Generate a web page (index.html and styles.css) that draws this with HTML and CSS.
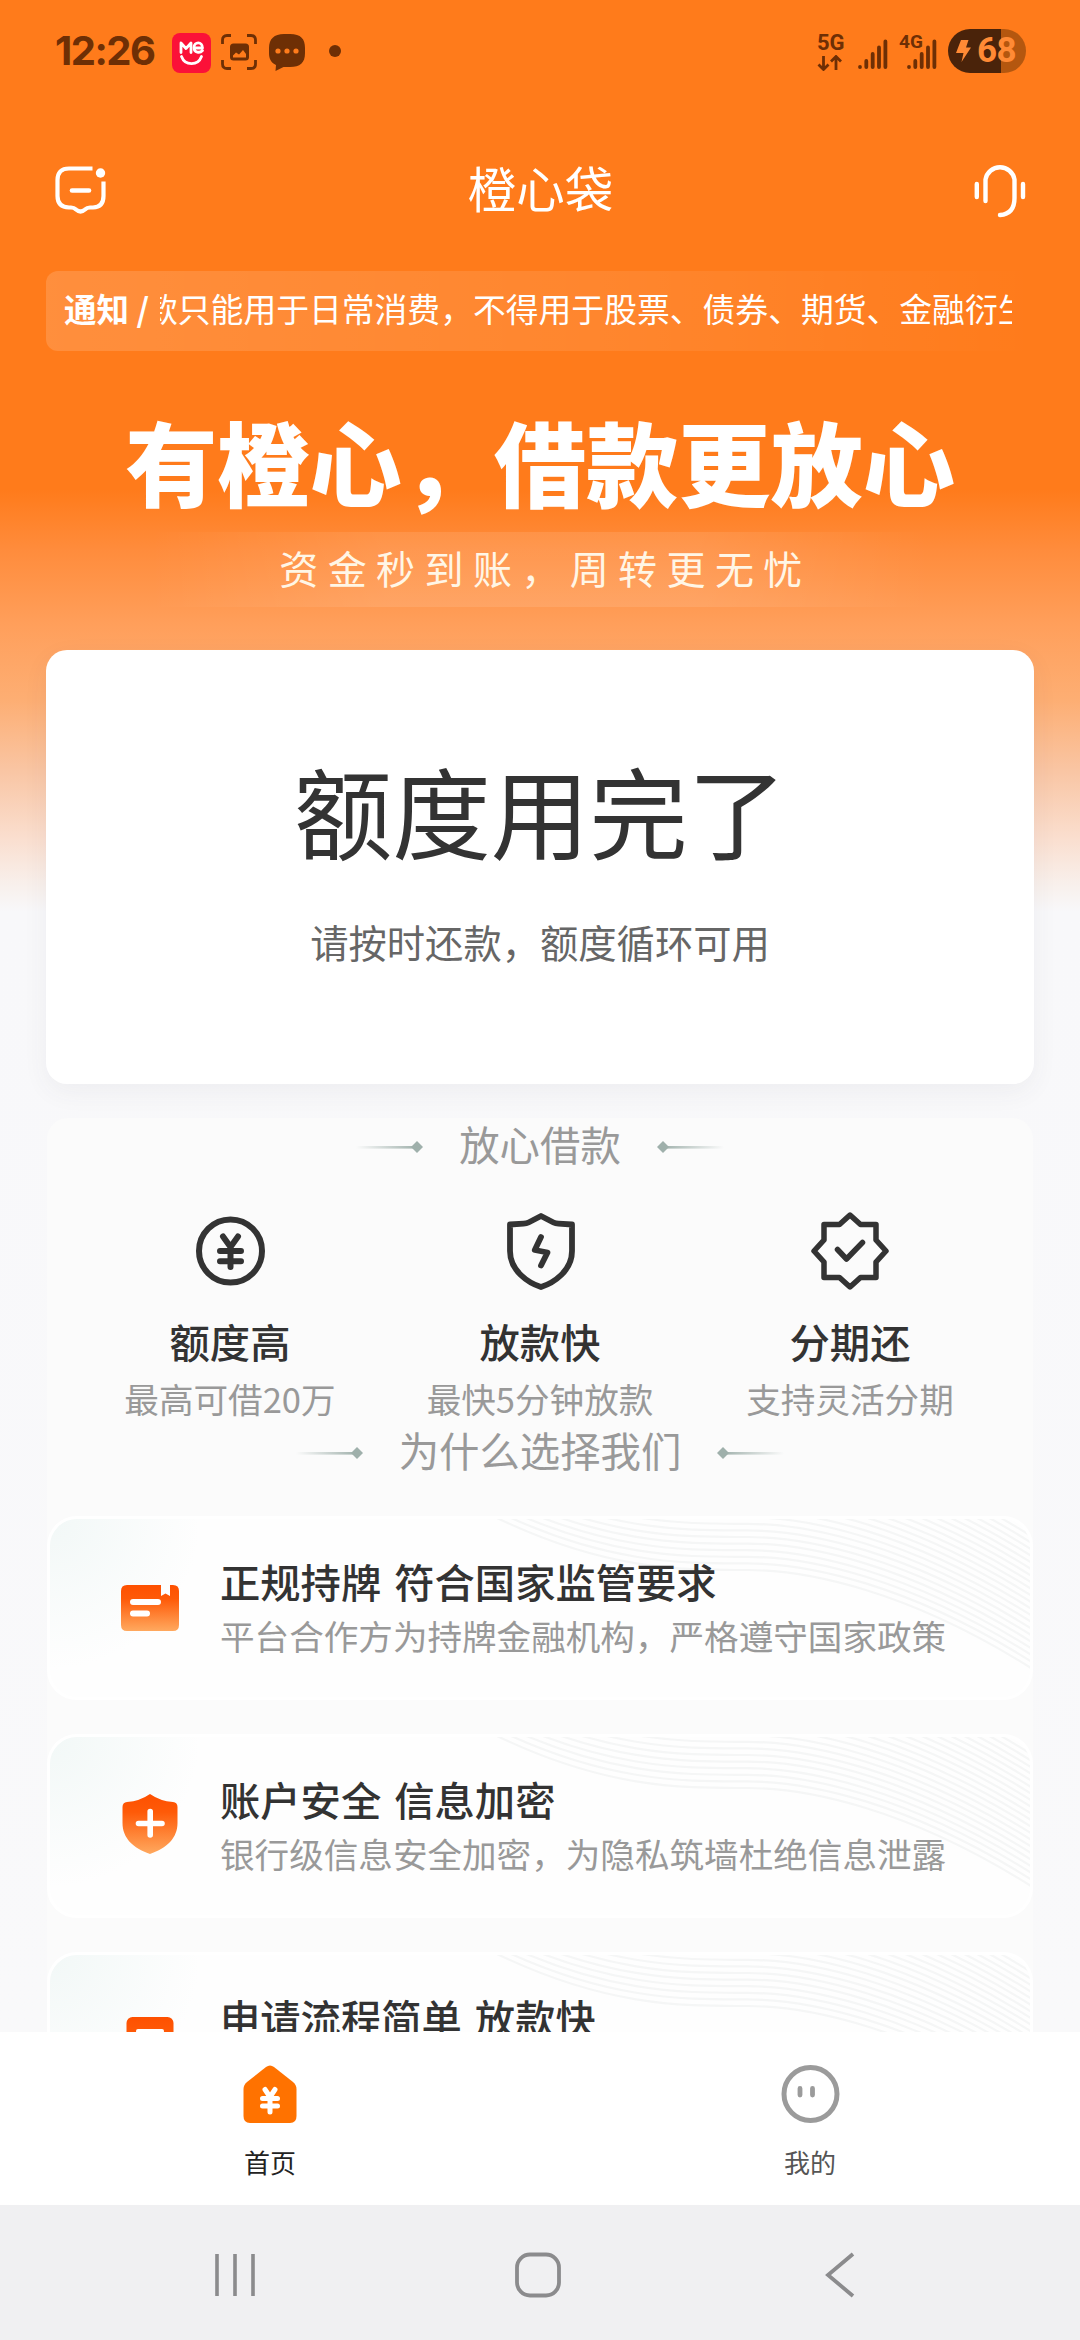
FILE: index.html
```html
<!DOCTYPE html>
<html lang="zh-CN">
<head>
<meta charset="utf-8">
<title>橙心袋</title>
<link rel="stylesheet" href="styles.css">
</head>
<body>
<svg class="defs" width="0" height="0" aria-hidden="true">
  <defs>
    <linearGradient id="ember" x1="0" y1="0" x2="0" y2="1"><stop offset="0" stop-color="#fe5000"/><stop offset=".3" stop-color="#fe5a08"/><stop offset="1" stop-color="#ffa95f"/></linearGradient>
    <linearGradient id="fade" x1="0" y1="0" x2="1" y2="0"><stop offset="0" stop-color="#9fb0ab" stop-opacity="0"/><stop offset="1" stop-color="#9fb0ab"/></linearGradient>
    <symbol id="ornament" viewBox="0 0 68 14"><rect x="0" y="6" width="62" height="2.6" fill="url(#fade)"/><path d="M61 1 67 7 61 13 55 7Z" fill="#9fb0ab"/></symbol>
    <path id="wave" d="M446 0C560 56 640 54 700 54S860 74 984 152"/>
    <g id="wave4"><use href="#wave"/><use href="#wave" y="-6.6"/><use href="#wave" y="-13.2"/><use href="#wave" y="-19.8"/></g>
    <symbol id="waves" viewBox="0 0 987 185"><g fill="none" stroke="#f5f6f6" stroke-width="2.2"><use href="#wave4"/><use href="#wave4" y="-26.4"/><use href="#wave4" y="-52.8"/><use href="#wave4" y="-79.2"/><use href="#wave4" y="-105.6"/><use href="#wave4" y="-132"/></g></symbol>
  </defs>
</svg>

<main class="screen">
  <div class="status">
    <span class="clock">12:26</span>
    <svg class="me" width="39" height="40" viewBox="0 0 39 40"><rect width="39" height="40" rx="8" fill="#fb1138"/><g fill="none" stroke="#fff" stroke-width="2.8" stroke-linecap="round" stroke-linejoin="round"><path d="M9 19.5V10l5 5.500L19 10v9.500"/><path d="M22.500 15h8c0-7-8.500-6.500-8.500-.5 0 5.500 6 5.800 8.500 3"/><path d="M9.500 23.500c3.500 9.500 16.500 9.500 20 0"/></g></svg>
    <svg class="shot" width="36" height="36" viewBox="0 0 36 36"><path d="M1.500 10V6Q1.500 1.500 6 1.500H10M26 1.500h4Q34.500 1.500 34.500 6v4M34.500 26v4q0 4.500-4.500 4.500h-4M10 34.500H6Q1.500 34.500 1.500 30V26" fill="none" stroke="#6e2f05" stroke-width="2.8"/><rect x="9" y="9.500" width="19" height="17" rx="3.500" fill="#6e2f05"/><path d="M12 23.500v-2l3-3 3 2 4-4.500 3 4v3.500z" fill="#ff7b1b"/></svg>
    <svg class="chat" width="36" height="37" viewBox="0 0 36 37"><path d="M15 0h6c11 0 15 5 15 14v5c0 10-5 14-15 14H14.500L6.500 37l.5-6C2 28.500 0 25 0 19v-5C0 5 5 0 15 0z" fill="#6e2f05"/><g fill="#ff7b1b"><circle cx="9" cy="17" r="2.600"/><circle cx="18" cy="17" r="2.600"/><circle cx="27" cy="17" r="2.600"/></g></svg>
    <i class="dot"></i>
    <div class="radio">
      <div class="fiveg"><span>5G</span><svg width="26" height="16" viewBox="0 0 26 16"><path d="M6.500 1v13M1.500 9.500l5 5 5-5M19 15V2M14 6.500l5-5 5 5" fill="none" stroke="#6e2f05" stroke-width="2.800"/></svg></div>
      <svg class="bars" width="30" height="30" viewBox="0 0 30 30"><path d="M2 28v0M8.300 28V22M14.700 28V15M21 28V8.500M27.400 28V2.500" stroke="#6e2f05" stroke-width="3.800" stroke-linecap="round"/></svg>
      <div class="fourg"><span>4G</span><svg width="30" height="30" viewBox="0 0 30 30"><path d="M2 28v0M8.300 28V22M14.700 28V15M21 28V8.500M27.400 28V2.500" stroke="#6e2f05" stroke-width="3.800" stroke-linecap="round"/></svg></div>
      <div class="battery"><svg width="15" height="22" viewBox="0 0 15 22"><path d="M5 0h7.500L10 7.500h5L5.500 22l2-9H0z" fill="#ff8a35"/></svg><span>68</span></div>
    </div>
  </div>

  <header class="bar">
    <svg width="52" height="50" viewBox="0 0 52 50"><g fill="none" stroke="#fff" stroke-width="4.200"><path d="M37.500 3.500H14Q2.500 3.500 2.500 15V31Q2.500 42 14 42.500H16Q19 42.500 21 44.500Q25.500 48.500 30 44.500Q32 42.500 35 42.500H38Q48.500 42 48.500 31V16.500"/><path d="M17 25.500H34" stroke-width="4.600" stroke-linecap="round"/></g><circle cx="45.500" cy="8" r="4.700" fill="#fff"/></svg>
    <h1>橙心袋</h1>
    <svg width="52" height="56" viewBox="0 0 52 56"><path d="M11.500 39V17.500a14.700 14.700 0 0 1 29 0V36Q40.500 52 26 53M2.800 22V35M49 22V35" fill="none" stroke="#fff" stroke-width="4.400" stroke-linecap="round"/></svg>
  </header>

  <div class="notice"><b>通知 /</b><div class="ticker"><span>款只能用于日常消费，不得用于股票、债券、期货、金融衍生</span></div></div>

  <h2 class="slogan">有橙心，借款更放心</h2>
  <p class="tagline">资金秒到账，周转更无忧</p>

  <section class="quota">
    <h3>额度用完了</h3>
    <p>请按时还款，额度循环可用</p>
  </section>

  <section class="panel">
    <div class="heading"><svg><use href="#ornament"/></svg><h4>放心借款</h4><svg class="flip"><use href="#ornament"/></svg></div>
    <div class="features">
      <div class="feature">
        <svg width="80" height="80" viewBox="0 0 80 80"><g fill="none" stroke="#333" stroke-width="6" stroke-linecap="round" stroke-linejoin="round"><circle cx="40.500" cy="40" r="31.500"/><path d="M33 25.500 40.500 36 48 25.500M40.500 36V56M30 40H51M30 50.300H51"/></g></svg>
        <h5>额度高</h5><p>最高可借20万</p>
      </div>
      <div class="feature">
        <svg width="80" height="80" viewBox="0 0 80 80"><g fill="none" stroke="#333" stroke-width="5.800" stroke-linecap="round" stroke-linejoin="round"><path d="M41 5 53.500 11.500Q55.500 12.500 58.500 12.700L72 13.500V40C72 60 53.500 72 41 76C28.500 72 10 60 10 40V13.500L23.500 12.700Q26.500 12.500 28.500 11.500Z"/><path d="M41 26 34.800 39 47.500 41.500 41 54.500"/></g></svg>
        <h5>放款快</h5><p>最快5分钟放款</p>
      </div>
      <div class="feature">
        <svg width="80" height="80" viewBox="0 0 80 80"><g fill="none" stroke="#333" stroke-width="5.500" stroke-linecap="round" stroke-linejoin="round"><path d="M40 4 50.500 13.500H66V29L76 40 66 51V66.500H50.500L40 76 29.500 66.500H14V51L4 40 14 29V13.500H29.500Z"/><path d="M27.500 38.500 36.500 48 52.500 31.500"/></g></svg>
        <h5>分期还</h5><p>支持灵活分期</p>
      </div>
    </div>
    <div class="heading second"><svg><use href="#ornament"/></svg><h4>为什么选择我们</h4><svg class="flip"><use href="#ornament"/></svg></div>

    <div class="reasons">
      <article class="reason">
        <svg class="waves"><use href="#waves"/></svg>
        <svg class="icon" width="58" height="58" viewBox="0 0 58 58"><path d="M6 6H40V17L44.500 14.500 49 17V6H52Q58 6 58 12V46Q58 52 52 52H6Q0 52 0 46V12Q0 6 6 6Z" fill="url(#ember)"/><path d="M12 23H37M12 34.500H26" stroke="#fff" stroke-width="6" stroke-linecap="round"/></svg>
        <div><h5>正规持牌 符合国家监管要求</h5><p>平台合作方为持牌金融机构，严格遵守国家政策</p></div>
      </article>
      <article class="reason">
        <svg class="waves"><use href="#waves"/></svg>
        <svg class="icon shield" width="58" height="62" viewBox="0 0 58 62"><path d="M29 1Q39 8 52 9Q56.500 9.500 56.500 14V30C56.500 45 46 55 29 61C12 55 1.500 45 1.500 30V14Q1.500 9.500 6 9Q19 8 29 1Z" fill="url(#ember)"/><path d="M17.500 30.500H41M29.200 18.500V42" stroke="#fff" stroke-width="5.600" stroke-linecap="round"/></svg>
        <div><h5>账户安全 信息加密</h5><p>银行级信息安全加密，为隐私筑墙杜绝信息泄露</p></div>
      </article>
      <article class="reason">
        <svg class="waves"><use href="#waves"/></svg>
        <svg class="icon" width="58" height="58" viewBox="0 0 58 58"><rect x="5.500" y="2" width="47" height="55" rx="6" fill="url(#ember)"/><path d="M17 16H41M17 27H41" stroke="#fff" stroke-width="4" stroke-linecap="round"/></svg>
        <div><h5>申请流程简单 放款快</h5></div>
      </article>
    </div>
  </section>
</main>

<nav class="tabs">
  <div class="tab active"><svg width="60" height="60" viewBox="0 0 60 60"><path d="M26 3Q30 0 34 3L53 18Q56.500 21 56.500 25V52Q56.500 59 50 59H10Q3.500 59 3.500 52V25Q3.500 21 7 18Z" fill="#ff7200"/><path d="M25 25.500 30 33 35 25.500M30 33V48M22.500 34.500H37.500M22.500 42H37.500" fill="none" stroke="#fff" stroke-width="5" stroke-linecap="round"/></svg><span>首页</span></div>
  <div class="tab"><svg width="60" height="60" viewBox="0 0 60 60"><circle cx="30.500" cy="30" r="26.500" fill="none" stroke="#9b9b9b" stroke-width="5"/><path d="M20 24.500V31M32.500 24.500V31" stroke="#9b9b9b" stroke-width="4.800" stroke-linecap="round"/></svg><span>我的</span></div>
</nav>

<footer class="sysnav">
  <svg width="40" height="44" viewBox="0 0 40 44"><path d="M2 1V43M20 1V43M38 1V43" stroke="#8b8b8d" stroke-width="3.600"/></svg>
  <svg class="home" width="46" height="46" viewBox="0 0 46 46"><rect x="2" y="2.500" width="42" height="41" rx="13" fill="none" stroke="#8b8b8d" stroke-width="3.800"/></svg>
  <svg width="30" height="46" viewBox="0 0 30 46"><path d="M28 2 3 23 28 44" fill="none" stroke="#8b8b8d" stroke-width="3.800"/></svg>
</footer>
</body>
</html>
```
FILE: styles.css
```css
* { box-sizing: border-box; margin: 0; padding: 0; }
body {
  width: 1080px; height: 2340px; overflow: hidden;
  display: flex; flex-direction: column;
  font-family: "Noto Sans CJK SC", sans-serif;
  background: #fff; color: #333;
}
.defs { position: absolute; }
svg { display: block; flex: none; }

.screen {
  height: 2032px; overflow: hidden; flex: none;
  background: linear-gradient(#ff7b1b 0, #ff7b1b 490px, #ff8c3c 550px, #ff9f5b 625px, #fdae73 700px, #f9c5a3 770px, #fadfd0 840px, #f8f0ec 885px, #f8f8fa 912px, #f9f9fa 100%);
}

.status { height: 102px; display: flex; align-items: center; padding: 2px 54px 0 55px; color: #6e2f05; font-family: Roboto, sans-serif; }
.clock { width: 117px; font: 700 40px/44px Inter, sans-serif; letter-spacing: -1.5px; white-space: nowrap; margin-top: -3px; }
.me { margin-top: 1px; }
.shot { margin-left: 10px; }
.chat { margin-left: 12px; }
.dot { width: 12px; height: 12px; border-radius: 50%; background: #6e2f05; margin-left: 24px; margin-top: -2px; }
.radio { margin-left: auto; display: flex; align-items: center; }
.fiveg, .fourg span { font-size: 22px; font-weight: 700; line-height: 17px; }
.fiveg { width: 26px; margin-right: 15px; }
.fiveg svg { margin-top: 4px; }
.bars { margin-top: 4px; }
.fourg { display: flex; margin: 4px 11px 0 11px; }
.fourg span { margin-top: -6px; width: 8px; font-size: 19px; }
.battery {
  width: 78px; height: 44px; border-radius: 22px; margin-top: -3px;
  display: flex; align-items: center; padding-left: 8px; gap: 6px;
  background: linear-gradient(90deg, #4a230a 53px, #b4570f 53px);
}
.battery span { font: 700 35px/44px Roboto, sans-serif; color: #ff8a35; letter-spacing: -.5px; }

.bar { height: 169px; padding: 7px 54px 0 55px; display: flex; align-items: center; justify-content: space-between; color: #fff; }
.bar h1 { font-size: 48.5px; font-weight: 400; line-height: 60px; margin-top: -7px; }

.notice {
  margin: 0 46px; height: 80px; padding: 0 22px 8px 18px; border-radius: 12px;
  display: flex; align-items: center; color: #fff;
  background: linear-gradient(90deg, rgba(255,255,255,.15), rgba(255,255,255,.08) 60%, rgba(255,255,255,0));
}
.notice b { font-size: 32.5px; width: 96px; white-space: pre; }
.ticker { flex: 1; overflow: hidden; display: flex; }
.ticker span { font-size: 32.8px; white-space: nowrap; margin-left: -15px; }

.slogan { margin-top: 63px; font-size: 92.2px; line-height: 92px; height: 93px; font-weight: 900; color: #fff; text-align: center; white-space: nowrap; }
.tagline {
  margin: 25px 150px 0; height: 75px; line-height: 71px; font-size: 39px; letter-spacing: 9.4px; text-indent: 11px;
  text-align: center; color: #fff6e6; font-weight: 400;
  background: linear-gradient(90deg, transparent, rgba(255,255,255,.1) 30%, rgba(255,255,255,.1) 70%, transparent);
}

.quota {
  margin: 43px 46px 0; height: 434px; padding-top: 110px; border-radius: 21px; background: #fff;
  box-shadow: 0 8px 26px rgba(60,60,90,.06); text-align: center;
}
.quota h3 { font-size: 98.5px; line-height: 98px; font-weight: 400; }
.quota p { margin-top: 64px; font-size: 38.3px; line-height: 40px; color: #666; }

.panel { margin: 34px 47px 0; padding-top: 2px; border-radius: 21px; background: #fbfbfb; }
.heading { display: flex; align-items: center; justify-content: center; gap: 35px; color: #999; height: 48px; }
.heading h4 { font-size: 40.4px; line-height: 48px; font-weight: 400; }
.heading svg { width: 68px; height: 14px; margin-top: 5px; }
.heading .flip { transform: scaleX(-1); }
.heading.second { margin-top: 8px; }
.features { display: grid; grid-template-columns: repeat(3, 310px); justify-content: center; margin-top: 43px; }
.feature { display: flex; flex-direction: column; align-items: center; }
.feature h5 { margin-top: 26px; font-size: 40.3px; line-height: 48px; font-weight: 500; }
.feature p { margin-top: 13px; font-size: 34.6px; line-height: 40px; color: #999; font-weight: 400; }

.reasons { display: flex; flex-direction: column; gap: 34px; margin-top: 42px; }
.reason {
  position: relative; height: 184px; border-radius: 30px; border: 3px solid #fff; overflow: hidden;
  display: flex; align-items: center; padding-left: 71px; gap: 41px;
  background: radial-gradient(circle at 0 0, #f2f8f7 0, #fefefe 150px);
}
.waves { position: absolute; left: -3px; top: -3px; width: 987px; height: 185px; }
.reason .icon, .reason div { position: relative; }
.reason .shield { margin-top: -4px; }
.reason div { height: 98px; margin-top: -4px; }
.reason h5 { font-size: 40.3px; line-height: 48px; font-weight: 500; word-spacing: 4px; }
.reason p { margin-top: 10px; font-size: 34.6px; line-height: 40px; color: #999; font-weight: 400; white-space: nowrap; }

.tabs { flex: none; height: 173px; display: grid; grid-template-columns: 1fr 1fr; background: #fff; }
.tab { display: flex; flex-direction: column; align-items: center; padding-top: 32px; font-size: 26px; line-height: 32px; color: #555; }
.tab span { margin-top: 22px; }
.active { color: #222; }

.sysnav { flex: 1; background: #f0f0f2; display: flex; align-items: center; padding: 5px 225px 0 215px; justify-content: space-between; }
.home { margin-right: 4px; }
```
